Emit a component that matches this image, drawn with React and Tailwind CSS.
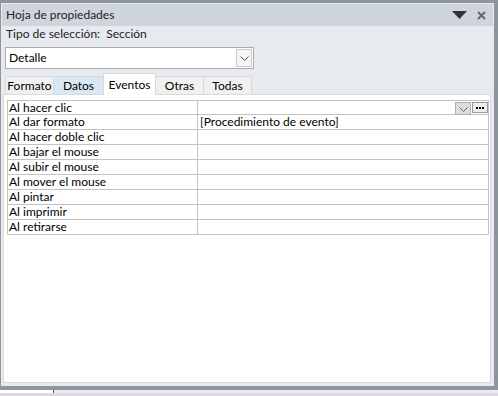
import React from "react";

const rows = [
  "Al hacer clic",
  "Al dar formato",
  "Al hacer doble clic",
  "Al bajar el mouse",
  "Al subir el mouse",
  "Al mover el mouse",
  "Al pintar",
  "Al imprimir",
  "Al retirarse",
];

function Chevron({ color = "#555" }) {
  return (
    <svg width="9" height="5" viewBox="0 0 9 5">
      <polyline points="0.5,0.5 4.5,4.5 8.5,0.5" fill="none" stroke={color} strokeWidth="1" />
    </svg>
  );
}

export default function App() {
  return (
    <div className="w-[498px] h-[396px] bg-[#8f959c] flex flex-col overflow-hidden font-['Lato',sans-serif] text-[12px] text-black">
      <div className="mt-[3px] ml-[1px] mr-[4px] h-[383px] bg-[#e7eaef] flex flex-col pl-[1px] pt-[1px]">
        {/* title bar */}
        <div className="h-[22px] mr-[1px] bg-[#cfd5dd] flex items-center pl-[4px] pr-[7px]">
          <span className="flex-1 text-[#222]">Hoja de propiedades</span>
          <svg width="15" height="8" viewBox="0 0 15 8" className="mr-[10px]">
            <polygon points="0,0 15,0 7.5,8" fill="#333" />
          </svg>
          <svg width="9" height="9" viewBox="0 0 9 9">
            <line x1="1" y1="1" x2="8" y2="8" stroke="#666" strokeWidth="2" />
            <line x1="8" y1="1" x2="1" y2="8" stroke="#666" strokeWidth="2" />
          </svg>
        </div>
        {/* Tipo de selección */}
        <div className="h-[16px] flex items-center pl-[4px] text-[#222] whitespace-pre">
          Tipo de selección:  Sección
        </div>
        {/* dropdown */}
        <div className="mt-[5px] ml-[3px] w-[249px] h-[22px] bg-white border border-[#acacac] flex items-center">
          <span className="flex-1 pl-[3px]">Detalle</span>
          <div className="w-[16px] h-[18px] mr-[1px] bg-[#f5f5f5] border border-[#c9c9c9] flex items-center justify-center">
            <Chevron />
          </div>
        </div>
        {/* tabs */}
        <div className="mt-[4px] ml-[3px] h-[21px] flex items-end relative z-10">
          <div className="w-[49px] h-[18px] bg-[#f0f0f0] border border-b-0 border-[#d9d9d9] flex items-center justify-center">Formato</div>
          <div className="w-[49px] h-[18px] bg-[#dae7f5] border-t border-[#d9d9d9] flex items-center justify-center">Datos</div>
          <div className="w-[53px] h-[22px] -mb-[1px] bg-white border border-b-0 border-[#d9d9d9] flex items-start pt-[2px] justify-center">Eventos</div>
          <div className="w-[48px] h-[18px] bg-[#f0f0f0] border-t border-r border-[#d9d9d9] flex items-center justify-center">Otras</div>
          <div className="w-[48px] h-[18px] bg-[#f0f0f0] border-t border-r border-[#d9d9d9] flex items-center justify-center">Todas</div>
        </div>
        {/* panel */}
        <div className="ml-[1px] w-[488px] h-[289px] bg-white border border-[#d9d9d9] pt-[5px] pl-[3px]">
          <div className="w-[482px] border border-b-0 border-[#c3c3c3]">
            {rows.map((r, i) => (
              <div key={r} className={`flex border-b border-[#c3c3c3] ${i === 0 ? "h-[14px]" : "h-[15px]"}`}>
                <div className="w-[190px] border-r border-[#c3c3c3] pl-[1px] leading-[14px] whitespace-nowrap">{r}</div>
                <div className="flex-1 pl-[2px] leading-[14px] flex items-start whitespace-nowrap">
                  {i === 1 && <span>[Procedimiento de evento]</span>}
                  {i === 0 && (
                    <div className="ml-auto flex items-start mt-[1px]">
                      <div className="w-[16px] h-[13px] bg-[#dcdcdc] border border-[#b0b0b0] flex items-end justify-center pb-[2px]">
                        <Chevron color="#666" />
                      </div>
                      <div className="ml-[1px] w-[16px] h-[11px] bg-[#ececec] border border-[#9a9a9a] flex items-center justify-center gap-[1px]">
                        <span className="w-[2px] h-[2px] bg-black" />
                        <span className="w-[2px] h-[2px] bg-black" />
                        <span className="w-[2px] h-[2px] bg-black" />
                      </div>
                    </div>
                  )}
                </div>
              </div>
            ))}
          </div>
        </div>
      </div>
      <div className="mt-[4px] h-[3px] flex">
        <div className="w-[53px] bg-white" />
        <div className="w-[1px] bg-[#555]" />
        <div className="flex-1 bg-[#ececf0]" />
      </div>
      <div className="h-[3px] bg-[#dcd9e3]" />
    </div>
  );
}
